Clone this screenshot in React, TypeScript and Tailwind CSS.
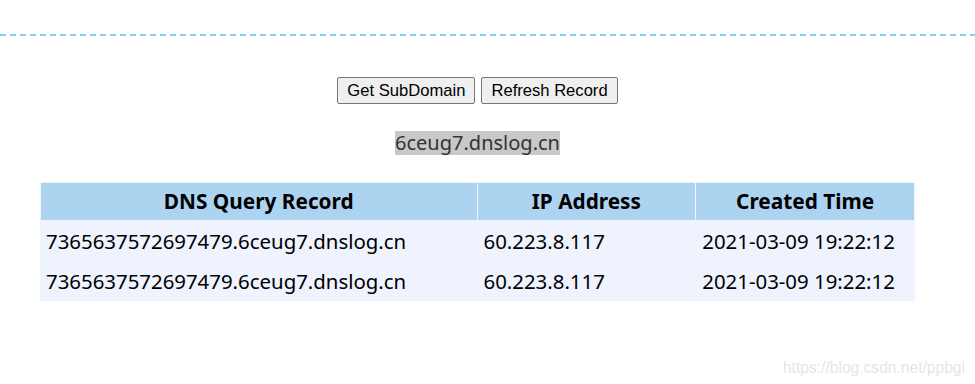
const records = [
  { query: '7365637572697479.6ceug7.dnslog.cn', ip: '60.223.8.117', time: '2021-03-09 19:22:12' },
  { query: '7365637572697479.6ceug7.dnslog.cn', ip: '60.223.8.117', time: '2021-03-09 19:22:12' },
];

export default function App() {
  return (
    <div className="relative h-[384px] w-[975px] overflow-hidden bg-white">
      <div className="w-[955px]">
        <div className="h-[34px]" />
        <div className="h-[2px] w-[975px] bg-[repeating-linear-gradient(90deg,#87cefa_0_6px,transparent_6px_10px)]" />

        <div className="mt-[41px] flex justify-center gap-[6px] font-['Liberation_Sans',Arial,sans-serif] text-[16.6px] text-black">
          <button className="h-[27px] rounded-[2px] border border-[#767676] bg-[#efefef] px-[9px] leading-[18px]">
            Get SubDomain
          </button>
          <button className="h-[27px] rounded-[2px] border border-[#767676] bg-[#efefef] px-[9px] leading-[18px]">
            Refresh Record
          </button>
        </div>

        <div className="mt-[27px] flex justify-center font-['Noto_Sans','Noto_Sans_CJK_SC',sans-serif] text-[20px] text-[#333]">
          <span className="bg-[#c8c8c8] leading-[24px]">6ceug7.dnslog.cn</span>
        </div>

        <div className="mt-[27px] flex justify-center">
          <table className="w-[875px] border-separate border-spacing-[1px] bg-[#eef3fe] font-['Noto_Sans','Noto_Sans_CJK_SC',sans-serif] text-[20.4px] text-black">
            <thead>
              <tr className="h-[37px] bg-[#acd3ef]">
                <th className="w-1/2 text-center text-[20.8px] font-bold">DNS Query Record</th>
                <th className="w-1/4 text-center text-[20.8px] font-bold">IP Address</th>
                <th className="w-1/4 text-center text-[20.8px] font-bold">Created Time</th>
              </tr>
            </thead>
            <tbody>
              {records.map((r, i) => (
                <tr key={i} className="h-[39px]">
                  <td className="px-[5px] pt-px text-left">{r.query}</td>
                  <td className="px-[6px] pt-px text-left">{r.ip}</td>
                  <td className="px-[6px] pt-px text-left">{r.time}</td>
                </tr>
              ))}
            </tbody>
          </table>
        </div>
      </div>

      <div className="absolute right-[10px] top-[356px] font-['Liberation_Sans',Arial,sans-serif] text-[15.6px] text-[#e6e6e6]">
        https://blog.csdn.net/ppbgi
      </div>
    </div>
  );
}
